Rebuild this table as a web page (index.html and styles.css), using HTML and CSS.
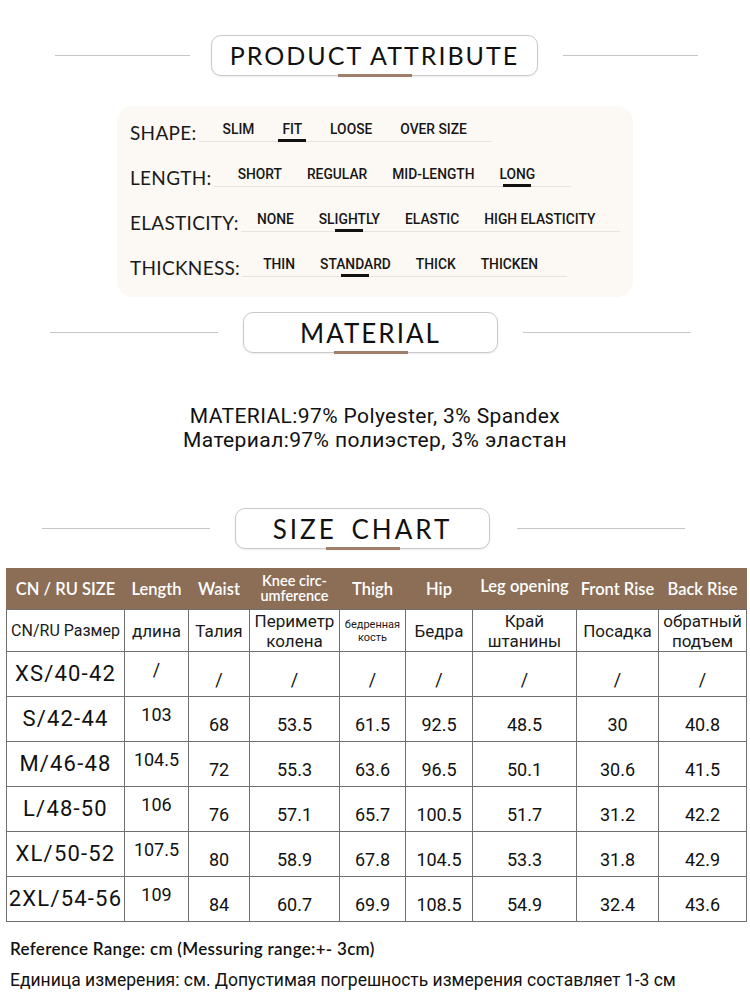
FILE: index.html
```html
<!DOCTYPE html>
<html lang="en">
<head>
<meta charset="utf-8">
<title>Product attribute</title>
<link rel="stylesheet" href="styles.css">
</head>
<body>
<div class="page">

  <div class="head head-attr">
    <span class="rule"></span>
    <div class="title-box"><span class="title">PRODUCT ATTRIBUTE</span></div>
    <span class="rule"></span>
  </div>

  <div class="attr-box">
    <div class="attr-row first">
      <span class="attr-label">SHAPE:</span>
      <div class="opts wide pr-25">
        <span class="opt">SLIM</span>
        <span class="opt sel">FIT</span>
        <span class="opt">LOOSE</span>
        <span class="opt">OVER SIZE</span>
      </div>
    </div>
    <div class="attr-row">
      <span class="attr-label">LENGTH:</span>
      <div class="opts pr-36">
        <span class="opt">SHORT</span>
        <span class="opt">REGULAR</span>
        <span class="opt">MID-LENGTH</span>
        <span class="opt sel">LONG</span>
      </div>
    </div>
    <div class="attr-row">
      <span class="attr-label">ELASTICITY:</span>
      <div class="opts pl-16 pr-25">
        <span class="opt">NONE</span>
        <span class="opt sel">SLIGHTLY</span>
        <span class="opt">ELASTIC</span>
        <span class="opt">HIGH ELASTICITY</span>
      </div>
    </div>
    <div class="attr-row">
      <span class="attr-label">THICKNESS:</span>
      <div class="opts pl-22 pr-29">
        <span class="opt">THIN</span>
        <span class="opt sel">STANDARD</span>
        <span class="opt">THICK</span>
        <span class="opt">THICKEN</span>
      </div>
    </div>
  </div>

  <div class="head head-mat">
    <span class="rule"></span>
    <div class="title-box"><span class="title t-mat">MATERIAL</span></div>
    <span class="rule"></span>
  </div>

  <div class="material">
    <p>MATERIAL:97% Polyester, 3% Spandex</p>
    <p>Материал:97% полиэстер, 3% эластан</p>
  </div>

  <div class="head head-size">
    <span class="rule"></span>
    <div class="title-box"><span class="title t-size">SIZE CHART</span></div>
    <span class="rule"></span>
  </div>

  <table class="chart">
    <colgroup>
      <col class="c1"><col class="c2"><col class="c3"><col class="c4"><col class="c5">
      <col class="c6"><col class="c7"><col class="c8"><col class="c9">
    </colgroup>
    <tr class="hdr">
      <td>CN / RU SIZE</td>
      <td>Length</td>
      <td>Waist</td>
      <td class="two">Knee circ-<br>umference</td>
      <td>Thigh</td>
      <td>Hip</td>
      <td class="up">Leg opening</td>
      <td>Front Rise</td>
      <td>Back Rise</td>
    </tr>
    <tr class="ru">
      <td class="first">CN/RU Размер</td>
      <td>длина</td>
      <td>Талия</td>
      <td>Периметр<br>колена</td>
      <td class="tiny">бедренная<br>кость</td>
      <td>Бедра</td>
      <td>Край<br>штанины</td>
      <td>Посадка</td>
      <td>обратный<br>подъем</td>
    </tr>
    <tr class="data">
      <td class="sz">XS/40-42</td><td class="len">/</td><td>/</td><td>/</td><td>/</td><td>/</td><td>/</td><td>/</td><td>/</td>
    </tr>
    <tr class="data">
      <td class="sz">S/42-44</td><td class="len">103</td><td>68</td><td>53.5</td><td>61.5</td><td>92.5</td><td>48.5</td><td>30</td><td>40.8</td>
    </tr>
    <tr class="data">
      <td class="sz">M/46-48</td><td class="len">104.5</td><td>72</td><td>55.3</td><td>63.6</td><td>96.5</td><td>50.1</td><td>30.6</td><td>41.5</td>
    </tr>
    <tr class="data">
      <td class="sz">L/48-50</td><td class="len">106</td><td>76</td><td>57.1</td><td>65.7</td><td>100.5</td><td>51.7</td><td>31.2</td><td>42.2</td>
    </tr>
    <tr class="data">
      <td class="sz">XL/50-52</td><td class="len">107.5</td><td>80</td><td>58.9</td><td>67.8</td><td>104.5</td><td>53.3</td><td>31.8</td><td>42.9</td>
    </tr>
    <tr class="data">
      <td class="sz">2XL/54-56</td><td class="len">109</td><td>84</td><td>60.7</td><td>69.9</td><td>108.5</td><td>54.9</td><td>32.4</td><td>43.6</td>
    </tr>
  </table>

  <div class="notes">
    <p class="n1">Reference Range: cm (Messuring range:+- 3cm)</p>
    <p class="n2">Единица измерения: см. Допустимая погрешность измерения составляет 1-3 см</p>
  </div>

</div>
</body>
</html>
```

FILE: styles.css
```css
html, body {
  margin: 0;
  padding: 0;
  background: #ffffff;
}

body {
  font-family: Lato, "Noto Sans", sans-serif;
  color: #111111;
}

.page {
  width: 750px;
}

/* ---------- section heads ---------- */
.head {
  display: flex;
  align-items: center;
  height: 41px;
}

.rule {
  display: block;
  height: 1px;
  background: #c6c6c6;
}

.title-box {
  position: relative;
  box-sizing: border-box;
  height: 41px;
  border: 1px solid #c9c9c9;
  border-radius: 10px;
  margin: 0 25px;
  display: flex;
  align-items: center;
  justify-content: center;
  box-shadow: 0 1px 2px rgba(0, 0, 0, 0.08);
  background: #ffffff;
}

.title-box::after {
  content: "";
  position: absolute;
  left: 50%;
  bottom: -2px;
  width: 74px;
  height: 3px;
  margin-left: -37px;
  background: #9f7f69;
}

.title {
  font-family: Lato, "Noto Sans", sans-serif;
  font-size: 25px;
  font-weight: 400;
  letter-spacing: 2px;
  line-height: 1;
  color: #111;
}

.head-attr {
  margin-top: 35px;
  padding-left: 55px;
}
.head-attr .rule { width: 135px; }
.head-attr .title-box { width: 327px; margin-left: 21px; }

.head-mat {
  margin-top: 15px;
  padding-left: 50px;
}
.head-mat .rule { width: 168px; }
.head-mat .title-box { width: 255px; }
.t-mat { font-size: 26px; letter-spacing: 2px; }

.head-size {
  margin-top: 56px;
  padding-left: 42px;
}
.head-size .rule { width: 168px; }
.head-size .title-box { width: 255px; margin-right: 27px; }
.t-size { font-size: 26px; letter-spacing: 3px; word-spacing: 5px; }

/* ---------- attribute box ---------- */
.attr-box {
  box-sizing: border-box;
  margin: 30px 0 0 117px;
  width: 516px;
  height: 191px;
  background: #fcf8f3;
  border-radius: 16px;
  padding-left: 13px;
}

.attr-row {
  display: flex;
  align-items: flex-end;
  height: 45px;
}
.attr-row.first { height: 36px; }

.attr-label {
  font-family: Lato, "Noto Sans", sans-serif;
  font-weight: 400;
  font-size: 19px;
  letter-spacing: 0.3px;
  line-height: 1;
  color: #1a1a1a;
  margin-right: 2px;
}

.opts {
  display: flex;
  gap: 25px;
  border-bottom: 1px solid #e6e2dd;
  padding-left: 24px;
}
.opts.wide { gap: 28px; }
.pl-16 { padding-left: 16px; }
.pl-22 { padding-left: 21px; }
.pr-25 { padding-right: 25px; }
.pr-29 { padding-right: 29px; }
.pr-36 { padding-right: 36px; }

.opt {
  position: relative;
  font-family: Roboto, "Noto Sans", sans-serif;
  font-weight: 500;
  font-size: 13.8px;
  line-height: 1;
  color: #161616;
  padding-bottom: 4px;
}

.opt.sel::after {
  content: "";
  position: absolute;
  left: 50%;
  bottom: -1px;
  width: 28px;
  height: 3px;
  margin-left: -14px;
  background: #111;
}

/* ---------- material text ---------- */
.material {
  margin-top: 51px;
  text-align: center;
  font-family: Roboto, "Noto Sans", sans-serif;
  font-size: 21px;
  letter-spacing: 0.4px;
  color: #111;
}
.material p {
  margin: 0;
  line-height: 24px;
}

/* ---------- size chart ---------- */
.chart {
  margin: 19px 0 0 6px;
  width: 740px;
  border-collapse: collapse;
  table-layout: fixed;
}

.c1 { width: 118px; }
.c2 { width: 64px; }
.c3 { width: 61px; }
.c4 { width: 90px; }
.c5 { width: 66px; }
.c6 { width: 67px; }
.c7 { width: 104px; }
.c8 { width: 82px; }
.c9 { width: 88px; }

.chart td {
  border: 1px solid #707070;
  text-align: center;
  padding: 0;
  white-space: nowrap;
  overflow: hidden;
}

.hdr td {
  background: #8c6e56;
  border-color: #8c6e56;
  border-bottom-color: #707070;
  color: #ffffff;
  height: 34px;
  font-family: Lato, "Noto Sans", sans-serif;
  font-weight: 600;
  font-size: 16.5px;
  line-height: 18px;
}
.hdr td.two {
  font-size: 14.5px;
  line-height: 15px;
  padding-bottom: 2px;
}
.hdr td.up { padding-bottom: 6px; }

.ru td {
  height: 41px;
  font-family: Roboto, "Noto Sans", sans-serif;
  font-size: 17px;
  line-height: 20px;
  color: #1a1a1a;
}
.ru td.first {
  font-size: 16px;
}
.ru td.tiny {
  font-size: 11px;
  line-height: 13px;
}

.data td {
  height: 45px;
  box-sizing: border-box;
  font-family: Roboto, "Noto Sans", sans-serif;
  font-size: 18px;
  color: #111;
  padding-top: 12px;
  line-height: 20px;
}
.data td.sz {
  font-size: 22px;
  letter-spacing: 1.2px;
  padding-top: 0;
}
.data td.len {
  padding-top: 0;
  padding-bottom: 8px;
}

/* ---------- notes ---------- */
.notes {
  padding-left: 10px;
  margin-top: 15px;
}
.notes p {
  margin: 0;
  line-height: 24px;
}
.n1 {
  font-family: Lato, "Noto Sans", sans-serif;
  font-weight: 600;
  font-size: 17px;
  letter-spacing: 0.3px;
  color: #111;
}
.n2 {
  margin-top: 7px !important;
  font-family: Roboto, "Noto Sans", sans-serif;
  font-size: 17.5px;
  color: #111;
}
```
